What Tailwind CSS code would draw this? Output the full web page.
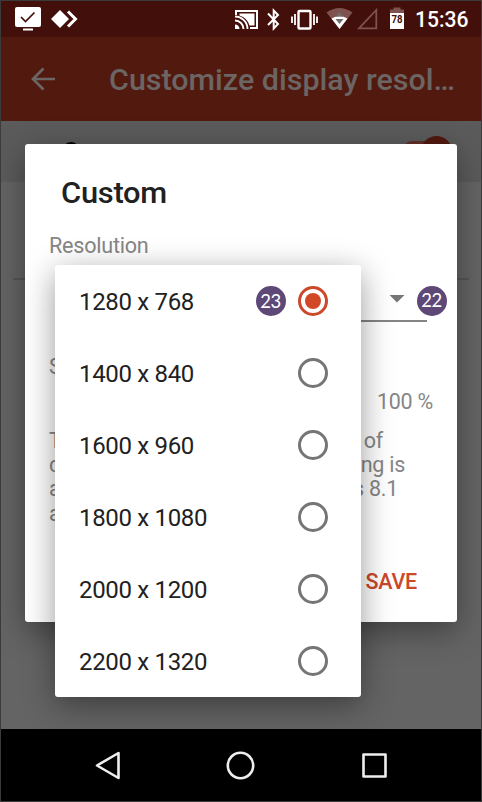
<!DOCTYPE html>
<html lang="en">
<head>
<meta charset="utf-8">
<title>Customize display resolution</title>
<script src="https://cdn.jsdelivr.net/npm/@tailwindcss/browser@4"></script>
</head>
<body class="bg-[#3b3b3b] overflow-hidden">
<div class="relative w-[482px] h-[802px] overflow-hidden border border-[#3b3b3b] flex flex-col bg-[#646464] font-[Roboto,sans-serif] text-[#212121]">
  <!-- Status bar -->
  <header class="h-9 shrink-0 bg-[#430f0a]">
    <svg class="block" width="480" height="36" viewBox="1 1 480 36" fill="none">
      <rect x="15" y="7" width="26" height="20" rx="2" fill="#fff"/><path d="M23 29.500h10" stroke="#fff" stroke-width="2"/><path d="M21 17l4.500 4.500 9-9" stroke="#430f0a" stroke-width="1.700"/>
      <path d="M51 19l9-9 9 9-9 9z" fill="#fff"/><path d="M68 11.500l7.500 7.500-7.500 7.500" stroke="#fff" stroke-width="3"/>
      <path d="M236 15v-4h21v17h-7" stroke="#fff" stroke-width="2"/><path d="M239.500 13.500h15v12h-5C248 20.500 244.500 17 239.500 15.500z" fill="#fff"/><path d="M235 20.500a8.500 8.500 0 0 1 8.500 8.500M235 16.500a12.500 12.500 0 0 1 12.500 12.500" stroke="#fff" stroke-width="1.900"/><path d="M235 24.500a4.500 4.500 0 0 1 4.500 4.500H235z" fill="#fff"/>
      <path d="M268 13.500l10 10.500-4.300 4.500v-18L278 15l-10 10" stroke="#fff" stroke-width="2"/>
      <rect x="298.500" y="11" width="12" height="17.500" rx="1" stroke="#fff" stroke-width="2.400"/><path d="M295 14v11M292 16.500v6.500M314 14v11M317 16.500v6.500" stroke="#fff" stroke-width="1.800"/>
      <path d="M326.500 12.500Q339.500 3.500 352.500 12.500L339.500 29z" fill="#7d524f"/><path d="M331.500 18.500Q339.500 14 347.500 18.500L339.500 29z" fill="#fff"/><path d="M339.500 11.500l3.500 5h-7zM335.500 19h8l-4 5z" fill="#716b69"/>
      <path d="M359 28.300L376.300 10v18.300z" stroke="#7d524f" stroke-width="1.800"/>
      <path d="M390 14V9.500h3.500V7.500h7v2h3.500V14z" fill="#7d524f"/><path d="M390 13h14v16h-14z" fill="#fff"/>
      <text x="397" y="22.500" text-anchor="middle" textLength="11" lengthAdjust="spacingAndGlyphs" font-size="11" font-weight="700" fill="#430f0a">78</text>
      <text x="415" y="27" textLength="53.500" lengthAdjust="spacingAndGlyphs" font-size="22" font-weight="500" fill="#fff">15:36</text>
    </svg>
  </header>
  <!-- App bar under the scrim -->
  <div class="h-[84px] shrink-0 bg-[#52190f] flex items-center text-[#6b6564]">
    <svg class="ml-[30px] shrink-0" width="24" height="24" viewBox="0 0 24 24" fill="none" stroke="currentColor" stroke-width="2.700"><path d="M24 12H2.500M12.500 1.500L2 12l10.500 10.500"/></svg>
    <svg class="ml-[54px]" width="348" height="44" fill="currentColor"><text x="0" y="32.500" textLength="346" lengthAdjust="spacingAndGlyphs" font-size="30" font-weight="500">Customize display resol…</text></svg>
  </div>
  <div class="relative h-[61px] shrink-0 bg-[#5b5b5b]">
    <div class="absolute left-[62px] top-[21px] size-4 rounded-full bg-black"></div>
    <div class="absolute left-[402px] top-[20px] w-10 h-[18px] rounded-full bg-[#63302a]"></div>
    <div class="absolute left-[420px] top-[15px] size-[31px] rounded-full bg-[#52190f]"></div>
  </div>
  <div class="flex-1"><div class="mt-[96px] mx-3 h-[2px] bg-[#565656]"></div></div>
  <!-- System navigation -->
  <nav class="h-[72px] shrink-0 bg-black relative z-10">
    <svg width="480" height="72" viewBox="1 729 480 72" fill="none" stroke="#eeeeee" stroke-width="2.600" stroke-linejoin="round"><path d="M97 765.500l21.500-12.500v25z"/><circle cx="240.500" cy="765.500" r="12.700"/><rect x="363.500" y="754.500" width="22" height="22"/></svg>
  </nav>
  <!-- Dialog -->
  <section class="absolute left-6 top-[143px] w-[432px] h-[478px] rounded-[3px] bg-white shadow-[0_9px_32px_rgba(0,0,0,0.38)] overflow-hidden text-[#868686] text-[21.500px] tracking-[-0.25px]">
    <h1 class="pl-9 pt-[30px]"><svg class="block" width="120" height="38" fill="currentColor"><text class="fill-[#212121]" x="0" y="29" textLength="106" lengthAdjust="spacingAndGlyphs" font-size="30" font-weight="500">Custom</text></svg></h1>
    <div class="pl-6 mt-[21px]"><svg class="block" width="110" height="26" fill="currentColor"><text x="0" y="20" textLength="99.500" lengthAdjust="spacingAndGlyphs" font-size="21.500">Resolution</text></svg></div>
    <div class="ml-[60px] mt-[19px] w-[342px] h-[44px] border-b-2 border-[#858585] flex justify-end pr-[22px]">
      <svg class="mt-[17px]" width="16" height="8"><path d="M0.500 0h15L8 7.500z" fill="#777"/></svg>
    </div>
    <div class="pl-6 mt-[33px] leading-6">S</div>
    <div class="pr-[24px] mt-[11px] leading-6 text-right">100 %</div>
    <div class="pl-6 mt-[15px] leading-[24.200px]">
      <div class="flex justify-between w-[334px]"><span>T</span><span>of</span></div>
      <div class="flex justify-between w-[356px]"><span>d</span><span>ng is</span></div>
      <div class="flex justify-between w-[349px]"><span>a</span><span>s 8.1</span></div>
      <div>a</div>
    </div>
    <div class="mt-[44px] pr-[40px] text-right leading-6 font-medium text-[#cb4829]">SAVE</div>
  </section>
  <div class="absolute left-[415.500px] top-[284.500px] size-[30px] rounded-full bg-[#5e4878] text-white text-[18.500px] tracking-[-0.5px] flex items-center justify-center font-[Lato,sans-serif]">22</div>
  <!-- Resolution menu -->
  <div class="absolute left-[54px] top-[264px] w-[306px] h-[432px] rounded-[3px] bg-white shadow-[0_8px_32px_rgba(0,0,0,0.4)] text-2xl tracking-[-0.32px]">
    <div class="h-[72px] pl-6 pr-[33px] flex items-center"><span class="pt-[2px] flex-1">1280 x 768</span><span class="mr-[12.500px] size-[30px] rounded-full bg-[#5e4878] text-white text-[18.500px] tracking-[-0.5px] flex items-center justify-center font-[Lato,sans-serif]">23</span><span class="size-[30px] rounded-full border-3 border-[#cb4829] flex items-center justify-center"><i class="size-4 rounded-full bg-[#d24726]"></i></span></div>
    <div class="h-[72px] pl-6 pr-[33px] flex items-center justify-between"><span class="pt-[2px]">1400 x 840</span><span class="size-[30px] rounded-full border-3 border-[#757575]"></span></div>
    <div class="h-[72px] pl-6 pr-[33px] flex items-center justify-between"><span class="pt-[2px]">1600 x 960</span><span class="size-[30px] rounded-full border-3 border-[#757575]"></span></div>
    <div class="h-[72px] pl-6 pr-[33px] flex items-center justify-between"><span class="pt-[2px]">1800 x 1080</span><span class="size-[30px] rounded-full border-3 border-[#757575]"></span></div>
    <div class="h-[72px] pl-6 pr-[33px] flex items-center justify-between"><span class="pt-[2px]">2000 x 1200</span><span class="size-[30px] rounded-full border-3 border-[#757575]"></span></div>
    <div class="h-[72px] pl-6 pr-[33px] flex items-center justify-between"><span class="pt-[2px]">2200 x 1320</span><span class="size-[30px] rounded-full border-3 border-[#757575]"></span></div>
  </div>
</div>
</body>
</html>
